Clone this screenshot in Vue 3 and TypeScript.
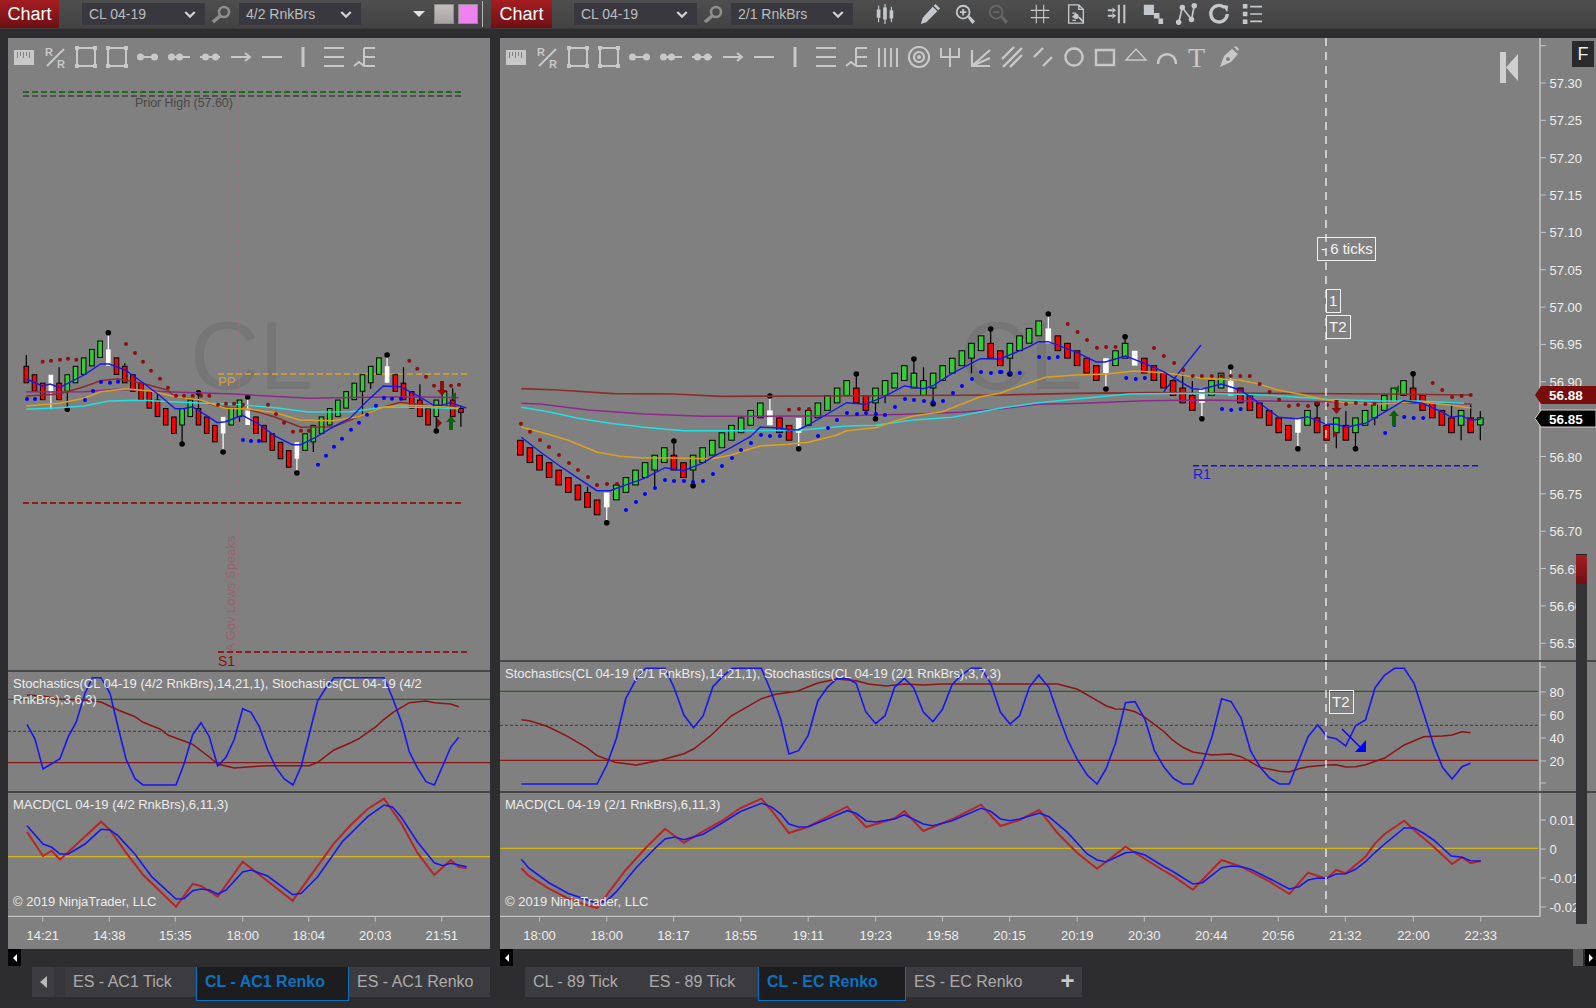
<script setup lang="ts">
type P = [number, number];
type Line = { pts: string; c: string; w: number };
type Dot = { x: number; y: number; r: number; c: string };

const conv = (ox: number, sx: number, oy: number, sy: number) => (a: number[]): P[] => {
  const out: P[] = [];
  for (let i = 0; i < a.length; i += 2) out.push([ox + a[i] / sx, oy + a[i + 1] / sy]);
  return out;
};
const z4 = conv(0, 3, 320, 3);
const z5 = conv(500, 3, 300, 3);
const z6 = conv(1000, 2.63, 300, 3);
const z7 = conv(0, 3, 660, 3);
const z8 = conv(490, 2.8, 650, 3);
const z9 = conv(1040, 2.82, 650, 3);
const glue = (a: P[], b: P[]) => a.filter((p) => p[0] < b[0][0]).concat(b);
const str = (p: P[]) => p.map(([x, y]) => `${x.toFixed(1)},${y.toFixed(1)}`).join(" ");
const rle = (s: string) => s.replace(/(\d+)([a-z])/g, (_, n, c) => c.repeat(+n));
const mkDots = (p: P[], c: string, r = 2.4): Dot[] => p.map(([x, y]) => ({ x, y, r, c }));

const BLUE = "#1616f0";
const GOLD = "#dca01e";
const CYAN = "#1fe0e0";
const PURPLE = "#8c2a8c";
const BROWN = "#8c2c2c";
const DKRED = "#8b0f0f";

const buildCandles = (
  x0: number, step: number, width: number, y0: number, brick: number, height: number,
  levels: number[], colors: string, wicks: [number, number, number][], lastH: number
) => {
  const fill: Record<string, string> = { r: "#ff0000", g: "#32cd32", w: "#ffffff" };
  const bodies = levels.map((l, i) => {
    const c = colors[i];
    const top = y0 + brick * l;
    const h = i === levels.length - 1 ? lastH : height;
    return {
      x: x0 + step * i - width / 2, y: top, w: width, h,
      fill: fill[c], stroke: c === "w" ? "none" : "#000000", mid: top + h / 2,
    };
  });
  const wickLines = wicks.map(([i, y]) => ({
    x: x0 + step * i, y1: bodies[i].mid, y2: y, c: colors[i] === "w" ? "#ffffff" : "#000000",
  }));
  const balls = wicks.filter((w) => w[2]).map(([i, y]) => ({ x: x0 + step * i, y }));
  return { bodies, wickLines, balls };
};

const upArrow = (x: number, y1: number, y2: number) =>
  `${x},${y1} ${x + 5},${y1 + 6} ${x + 2},${y1 + 6} ${x + 2},${y2} ${x - 2},${y2} ${x - 2},${y1 + 6} ${x - 5},${y1 + 6}`;
const downArrow = (x: number, y1: number, y2: number) =>
  `${x},${y2} ${x + 5},${y2 - 6} ${x + 2},${y2 - 6} ${x + 2},${y1} ${x - 2},${y1} ${x - 2},${y2 - 6} ${x - 5},${y2 - 6}`;

// ---------- left chart ----------
const leftCandles = buildCandles(
  26.3, 8.2, 4.6, 366.3, 8.44, 16.5,
  [0,1,2,1,2,1,0,-1,-2,-3,-2,-1,0,1,2,3,4,5,6,5,4,5,6,7,6,5,4,5,6,7,8,9,10,9,8,7,6,5,4,3,2,1,0,-1,0,1,2,3,4,5,4,3,4,5],
  rle("3r1w1r5g1w8r2g3r1w2g1w5r1w10g1w5r2g2r"),
  [[0,355,0],[3,409.3,0],[4,367.3,0],[5,409.3,1],[10,332.7,1],[12,363.3,0],[16,393.3,0],[19,444,1],[21,392.7,1],[24,452,1],[26,421.7,0],[27,397,1],[33,473,1],[35,452,0],[41,414,0],[42,388.7,0],[44,355,1],[46,367.3,0],[48,384.3,0],[50,431,1],[52,388.3,0],[53,406,0],[53,426.7,0]],
  4
);
const leftLines: Line[] = [
  { c: PURPLE, w: 1.6, pts: str(z4([79,215,178,216,252,215,352,208,500,215,700,222,926,235,1100,232,1250,230,1376,233])) },
  { c: BROWN, w: 1.6, pts: str(z4([79,228,178,222,252,200,302,182,352,176,427,190,502,210,526,231,577,236,652,258,752,270,827,292,902,322,1001,320,1075,290,1150,262,1200,247,1301,258,1376,258])) },
  { c: CYAN, w: 1.4, pts: str(z4([79,268,178,263,252,258,328,243,427,241,577,248,702,253,826,263,926,276,1051,275,1150,262,1250,262,1376,266])) },
  { c: GOLD, w: 1.6, pts: str(z4([79,258,178,250,252,235,302,215,376,206,451,213,526,230,601,240,676,265,752,268,827,278,900,300,1000,302,1075,290,1150,262,1200,256,1300,258,1376,265])) },
  { c: BLUE, w: 1.4, pts: str(z4([79,177,127,198,151,192,178,203,252,165,302,132,328,132,376,150,427,187,477,225,526,266,551,266,577,260,625,290,652,308,676,305,727,286,776,312,827,349,877,374,902,374,951,350,1001,320,1051,294,1099,245,1150,198,1200,200,1250,225,1301,256,1325,256,1351,248,1376,256,1399,264])) },
];
const leftDots: Dot[] = [
  ...mkDots(z4([128,125,153,122,180,119,204,116,229,119,378,72,405,99,429,125,453,152,480,176,504,203,528,227,552,227,578,227,603,227,628,227,654,254,678,251,702,251,729,254,804,254,828,282,852,308,879,335,903,332,927,332,1228,122,1252,146,1278,170,1302,197,1327,200,1353,197,1377,194]), DKRED, 2),
  ...mkDots(z4([81,237,105,237,255,240,279,213,303,186,330,188,354,185,729,360,753,363,777,363,954,434,978,407,1002,380,1026,356,1053,329,1077,308,1101,284,1128,257,1152,234,1176,236,1203,236]), "#0000ff", 2),
];
const leftStoch: Line[] = [
  { c: "#8b1414", w: 1.5, pts: str(z7([81,105,129,108,180,118,255,120,303,126,354,150,405,170,429,187,480,207,505,226,552,243,578,253,628,291,653,312,703,324,753,320,803,317,928,317,953,307,1002,270,1052,248,1078,235,1128,200,1152,178,1178,158,1228,128,1278,123,1303,128,1352,132,1376,140])) },
  { c: BLUE, w: 1.6, pts: str(z7([81,193,105,237,129,327,180,296,205,230,229,186,255,100,277,53,303,53,330,100,354,200,378,297,405,356,429,375,528,375,552,312,578,224,603,188,628,230,653,318,678,292,703,238,728,146,753,157,778,200,803,270,828,323,853,357,879,375,904,318,928,222,953,122,977,85,1002,53,1152,53,1178,115,1204,185,1228,275,1252,323,1278,365,1303,375,1328,318,1352,262,1376,232])) },
];
const leftMacd: Line[] = [
  { c: "#b52626", w: 2, pts: str(z7([81,515,129,588,155,572,180,599,303,485,330,510,378,578,430,645,528,740,578,672,603,678,653,710,728,605,878,722,928,652,1002,550,1052,495,1103,447,1152,416,1204,490,1252,578,1303,645,1352,600,1376,620,1400,625])) },
  { c: BLUE, w: 1.6, pts: str(z7([81,497,129,552,155,562,180,582,205,582,255,552,303,508,330,510,354,527,405,583,455,650,528,717,552,716,578,692,603,687,628,690,653,702,678,690,728,636,753,630,803,648,878,704,904,700,953,650,1027,545,1103,470,1152,435,1178,442,1204,472,1252,545,1303,608,1328,617,1352,610,1400,620])) },
];

// ---------- right chart ----------
const rightCandles = buildCandles(
  520.3, 9.6, 5.6, 440.3, 7.46, 14.8,
  [0,1,2,3,4,5,6,7,8,7,6,5,4,3,2,1,2,3,2,1,0,-1,-2,-3,-4,-5,-4,-3,-2,-3,-4,-5,-6,-7,-8,-7,-6,-7,-8,-9,-10,-9,-8,-9,-10,-11,-12,-13,-14,-13,-12,
   -13,-14,-15,-16,-15,-14,-13,-12,-11,-10,-11,-12,-13,-12,-11,-10,-9,-8,-7,-6,-7,-8,-9,-8,-7,-6,-5,-4,-3,-2,-3,-4,-3,-2,-3,-2,-3,-4,-5,-6,-7,-8,-7,-6,-5,-4,-3,-4,-3,-3],
  rle("9r1w6g2r8g1w2r1w5g2r12g2r4g1w5r1w2g1w6r1w2g1w6r1w1g2r1g1r6g5r1g1r1g"),
  [[7,486.7,0],[9,522.7,1],[14,486.7,0],[16,441,1],[18,485.7,1],[26,396,1],[29,448.7,1],[35,374,1],[37,418.7,1],[38,403.3,0],[41,359,1],[42,367.3,0],[43,403.7,1],[47,373.3,0],[49,329,1],[51,374,1],[55,314,1],[61,389,1],[63,336.7,1],[69,374,0],[70,381,0],[71,418.7,1],[74,367,1],[81,448.7,1],[83,404,1],[85,448.3,0],[86,411,0],[87,448.7,1],[89,425.3,0],[93,373.7,1],[97,404,0],[98,440.3,0],[99,404,0],[100,411,0],[100,440.3,0]],
  7
);
const rightLines: Line[] = [
  { c: BROWN, w: 1.7, pts: str(glue(z5([64,266,175,270,340,281,520,282,664,289,1000,288,1500,284]), z6([0,285,200,280,400,278,700,280,1000,282,1240,285]))) },
  { c: PURPLE, w: 1.6, pts: str(glue(z5([64,310,120,312,265,330,433,342,607,349,781,349,1040,347,1213,343,1384,337,1500,327]), z6([0,327,100,313,220,310,380,302,530,300,700,303,860,305,1000,310,1100,308,1240,312]))) },
  { c: CYAN, w: 1.4, pts: str(glue(z5([64,322,145,335,235,355,330,370,433,382,550,392,694,392,895,391,1040,378,1126,376,1240,360,1357,352,1500,331]), z6([0,325,100,308,220,295,340,282,530,280,700,285,860,298,1000,303,1100,303,1220,310]))) },
  { c: GOLD, w: 1.6, pts: str(glue(z5([64,381,145,403,205,421,290,456,360,469,433,474,520,474,637,476,694,465,751,446,781,438,865,433,925,427,1009,406,1040,392,1126,383,1183,364,1240,348,1327,335,1441,290,1500,280]), z6([0,280,60,255,120,232,200,225,280,222,354,213,430,218,480,226,530,235,630,240,680,252,730,270,800,285,850,298,900,307,1000,312,1100,305,1190,316,1238,324]))) },
  { c: BLUE, w: 1.4, pts: str(glue(z5([64,412,120,455,175,495,235,535,291,572,330,572,390,550,433,535,495,503,550,512,607,490,640,470,694,442,751,410,781,381,838,384,865,390,895,389,925,375,982,342,1040,308,1096,313,1153,290,1213,258,1270,266,1297,258,1357,220,1441,176,1498,177]), z6([0,177,25,165,77,140,101,125,127,125,203,158,253,186,277,186,330,168,380,190,430,215,456,233,506,266,530,268,582,252,632,270,683,310,733,352,783,356,809,350,859,373,885,373,910,382,961,370,1036,320,1061,302,1111,310,1161,335,1187,352,1213,347,1238,360,1264,358]))) },
];
const rightDots: Dot[] = [
  ...mkDots(z5([63,371,90,395,120,420,147,441,177,465,207,489,234,510,264,531,291,555,321,552,351,552,867,329,897,327,927,327]), DKRED, 2),
  ...mkDots(z6([178,72,204,96,229,120,255,143,279,141,304,141,405,144,431,168,458,189,482,210,507,228,531,228,557,228,582,228,607,228,632,228,657,228,683,252,709,276,734,299,760,318,784,315,810,318,835,310,860,315,885,312,910,312,936,309,961,312,985,312,1138,249,1163,270,1189,291,1214,288,1238,285]), DKRED, 2),
  ...mkDots(z5([378,630,408,606,435,582,465,564,495,540,522,543,552,543,579,546,609,543,639,522,666,498,696,474,723,450,753,429,783,405,810,408,840,408,954,408,984,384,1011,360,1041,339,1071,342,1098,339,1128,342,1155,345,1185,321,1215,297,1242,300,1272,303,1299,306,1329,303,1359,279,1386,258,1416,237,1443,216,1473,219,1500,216]), "#0000ff", 2),
  ...mkDots(z6([4,216,27,219,52,219,103,171,129,174,152,171,332,234,357,237,381,234,584,327,608,330,633,327,1013,399,1037,375,1063,351,1088,354,1113,354]), "#0000ff", 2),
];
const rightStoch: Line[] = [
  { c: "#8b1414", w: 1.5, pts: str(glue(z8([88,209,110,212,160,229,218,260,270,292,300,317,350,337,410,345,480,330,543,311,570,297,620,255,675,198,760,146,800,133,860,124,918,99,972,87,1025,92,1060,102,1110,108,1160,102,1213,105,1267,102,1568,102]), z9([0,102,50,102,106,118,161,152,186,167,213,177,241,178,268,185,296,202,350,245,376,272,403,292,431,306,485,315,539,312,567,320,621,352,675,364,703,366,730,356,756,350,810,345,835,344,862,351,890,350,918,344,972,324,1027,285,1082,260,1135,258,1162,255,1190,245,1214,248]))) },
  { c: BLUE, w: 1.6, pts: str(glue(z8([88,402,300,402,327,345,354,265,380,146,408,90,435,55,490,55,517,117,543,195,570,233,597,197,624,110,651,80,678,55,760,55,787,125,814,208,837,312,864,302,891,256,918,152,945,112,972,85,1000,85,1025,100,1052,185,1080,221,1106,197,1133,112,1160,85,1186,113,1213,185,1240,215,1267,178,1294,104,1320,75,1347,55,1375,55,1402,100,1429,186,1456,222,1483,197,1510,112,1537,75]), z9([0,80,25,112,50,190,78,270,106,330,133,375,161,402,186,357,213,280,241,158,268,155,296,208,323,302,350,352,376,385,403,402,431,402,458,342,485,260,512,146,539,155,567,204,594,303,621,352,648,385,675,402,703,402,730,330,756,260,783,224,810,260,835,266,862,288,890,227,918,210,945,113,972,75,1000,55,1027,55,1055,100,1082,190,1110,285,1135,352,1162,387,1190,350,1214,340]))) },
];
const rightMacd: Line[] = [
  { c: "#b52626", w: 2, pts: str(glue(z8([88,655,108,677,165,716,218,745,270,765,300,774,327,735,380,660,435,595,490,536,543,578,600,542,650,512,700,475,760,446,787,480,837,549,891,530,1000,470,1053,531,1133,505,1160,483,1213,543,1294,508,1375,464,1429,528,1483,510,1537,480]), z9([0,483,50,550,106,610,161,656,241,590,323,645,378,680,431,719,512,630,567,650,648,695,703,732,756,668,808,686,835,660,862,670,918,620,945,580,972,552,1027,512,1055,540,1110,590,1162,642,1190,622,1214,640,1243,633]))) },
  { c: BLUE, w: 1.6, pts: str(glue(z8([88,628,108,654,165,698,218,730,300,760,327,752,354,725,408,655,462,595,490,567,517,561,543,569,597,553,651,518,700,485,760,460,787,470,814,492,837,522,864,531,891,530,945,507,1000,482,1025,490,1053,513,1080,516,1133,507,1160,494,1213,522,1240,527,1294,512,1375,475,1402,484,1429,507,1456,512,1483,507,1537,490]), z9([0,490,25,500,78,548,133,612,161,630,186,636,241,608,268,606,296,615,350,650,376,665,431,702,458,698,512,653,539,648,567,650,594,658,648,686,703,717,730,710,756,690,783,684,808,685,835,672,862,671,890,658,918,635,945,607,972,582,1027,534,1055,534,1082,550,1110,570,1160,618,1190,622,1214,632,1243,633]))) },
];

const prices = ["57.30","57.25","57.20","57.15","57.10","57.05","57.00","56.95","56.90","56.85","56.80","56.75","56.70","56.65","56.60","56.55"]
  .map((t, i) => ({ t, y: 83 + 37.35 * i }))
  .filter((p) => p.t !== "56.85");
const stochAxis = [{ t: "80", y: 692 }, { t: "60", y: 715 }, { t: "40", y: 738 }, { t: "20", y: 761 }];
const macdAxis = [{ t: "0.01", y: 820 }, { t: "0", y: 849 }, { t: "-0.01", y: 878 }, { t: "-0.02", y: 907 }];

// ---------- shared windows ----------
const windows = [
  {
    id: "left", instr: "CL 04-19", period: "4/2 RnkBrs",
    main: { vb: "8 38 482 632", candles: leftCandles, lines: leftLines, dots: leftDots, wm: 190 },
    stoch: {
      vb: "8 672 482 119", lines: leftStoch, green: 699.3, mid: 731.3, red: 762.7, x1: 8, x2: 490,
      label: "Stochastics(CL 04-19 (4/2 RnkBrs),14,21,1), Stochastics(CL 04-19 (4/2 RnkBrs),3,6,3)",
    },
    macd: { vb: "8 793 482 124", lines: leftMacd, zero: 856.7, x1: 8, x2: 490, label: "MACD(CL 04-19 (4/2 RnkBrs),6,11,3)" },
    axis: {
      vb: "8 918 482 31", x2: 490,
      labels: [["14:21", 42.7], ["14:38", 109.3], ["15:35", 175.3], ["18:00", 242.7], ["18:04", 308.7], ["20:03", 375.3], ["21:51", 441.7]] as [string, number][],
    },
    tools: 12,
    tabs: [
      { t: "ES - AC1 Tick", w: 131 },
      { t: "CL - AC1 Renko", w: 153, on: true },
      { t: "ES - AC1 Renko", w: 141 },
    ],
  },
  {
    id: "right", instr: "CL 04-19", period: "2/1 RnkBrs",
    main: { vb: "500 38 1096 622", candles: rightCandles, lines: rightLines, dots: rightDots, wm: 960 },
    stoch: {
      vb: "500 662 1096 129", lines: rightStoch, green: 691.3, mid: 725.3, red: 760.3, x1: 500, x2: 1538,
      label: "Stochastics(CL 04-19 (2/1 RnkBrs),14,21,1), Stochastics(CL 04-19 (2/1 RnkBrs),3,7,3)",
    },
    macd: { vb: "500 793 1096 124", lines: rightMacd, zero: 848.3, x1: 500, x2: 1538, label: "MACD(CL 04-19 (2/1 RnkBrs),6,11,3)" },
    axis: {
      vb: "500 918 1096 31", x2: 1540,
      labels: [["18:00", 539.6], ["18:00", 606.8], ["18:17", 673.6], ["18:55", 740.7], ["19:11", 808.2], ["19:23", 875.7], ["19:58", 942.5], ["20:15", 1009.6], ["20:19", 1077.2], ["20:30", 1144.3], ["20:44", 1211.3], ["20:56", 1278.3], ["21:32", 1345.3], ["22:00", 1413.4], ["22:33", 1480.8]] as [string, number][],
    },
    tools: 24,
    tabs: [
      { t: "CL - 89 Tick", w: 116 },
      { t: "ES - 89 Tick", w: 117 },
      { t: "CL - EC Renko", w: 148, on: true },
      { t: "ES - EC Renko", w: 147 },
    ],
  },
];

type Ico = { s?: string; f?: string; sw?: number; t?: [string, number, number, number][] };
const drawIcons: Ico[] = [
  { f: "M2 5h20v15H2z M5 7v6h1V7z M8 7v4h1V7z M11 7v6h1V7z M14 7v4h1V7z M17 7v6h1V7z" },
  { s: "M4 21L21 4", t: [["R", 2, 11, 11], ["R", 14, 23, 11]] },
  { s: "M3 3h18v18H3z", f: "M1 1h4v4H1z M19 1h4v4h-4z M1 19h4v4H1z M19 19h4v4h-4z" },
  { s: "M3 3h18v18H3z", f: "M1 1h4v4H1z M19 1h4v4h-4z M1 19h4v4H1z M19 19h4v4h-4z" },
  { s: "M5 12h17", f: "M1 12a3.5 3.5 0 1 0 7 0a3.5 3.5 0 1 0-7 0z M15 12a3.5 3.5 0 1 0 7 0a3.5 3.5 0 1 0-7 0z" },
  { s: "M5 12h18", f: "M1 12a3.5 3.5 0 1 0 7 0a3.5 3.5 0 1 0-7 0z M9 12a3.5 3.5 0 1 0 7 0a3.5 3.5 0 1 0-7 0z" },
  { s: "M2 12h20", f: "M4 12a3.5 3.5 0 1 0 7 0a3.5 3.5 0 1 0-7 0z M14 12a3.5 3.5 0 1 0 7 0a3.5 3.5 0 1 0-7 0z" },
  { s: "M2 12h19M16 8l5 4-5 4" },
  { s: "M2 12h20" },
  { s: "M12 2v20", sw: 3 },
  { s: "M2 3h20M2 12h20M2 21h20" },
  { s: "M11 3h11M11 12h11M11 21h11M11 3v18M1 21l5-4 5 4" },
  { s: "M3 3v19M9 3v19M15 3v19M21 3v19" },
  { s: "M12 2a10 10 0 1 0 0.01 0zM12 7a5 5 0 1 0 0.01 0z", f: "M10 12a2 2 0 1 0 4 0a2 2 0 1 0-4 0z", sw: 2.2 },
  { s: "M3 3v9h18V3M12 3v19" },
  { s: "M3 5v16h18M3 21L21 5M3 21L21 13", sw: 2.2 },
  { s: "M2 14L14 2M3 22L22 3M10 22L22 10", sw: 2.4 },
  { s: "M3 12L12 3M12 21L21 12", sw: 2.4 },
  { s: "M12 3.5a8.5 8.5 0 1 0 0.01 0z", sw: 2.4 },
  { s: "M3 5h18v15H3z", sw: 2.4 },
  { s: "M2 15L12 4L22 15Z", sw: 1.4 },
  { s: "M3 19C3 6 21 6 21 19", sw: 2.4 },
  { t: [["T", 2, 22, 28]] },
  { f: "M3 22L7 11L15 4l6 5-7 8zM17 2l2-1 3 3-1 2z M9 14a2 2 0 1 0 4 0a2 2 0 1 0-4 0z" },
];

const topIcons: (Ico & { gap: number; dim?: string })[] = [
  { gap: 21, s: "M5 3v18M12 1v22M19 4v17", sw: 1.3, f: "M3 7h4v9H3z M10 5h4v13h-4z M17 8h4v9h-4z" },
  { gap: 23, f: "M4 16L15 4l5 5L8 21l-6 2z M16 3l2-2 5 5-2 2z" },
  { gap: 13, s: "M3 10a7 7 0 1 0 14 0a7 7 0 1 0-14 0M6.5 10h7M10 6.5v7", sw: 2, f: "M15 16l2-2 6 6-3 3z" },
  { gap: 11, s: "M3 10a7 7 0 1 0 14 0a7 7 0 1 0-14 0M6.5 10h7", sw: 2, f: "M15 16l2-2 6 6-3 3z", dim: "#676767" },
  { gap: 20, s: "M8 2v20M16 2v20M2 8h20M2 16h20", sw: 1.2 },
  { gap: 14, s: "M4 2h11l5 5v15H4zM15 2v5h5M8 11h4M8 15h2M8 19h4", sw: 1.5, f: "M12 11.5a3 3 0 1 0 .01 0z M14.5 16l1.5-1 5 5-1.5 1.5z" },
  { gap: 19, s: "M14 2v20M20 2v20M2 8h5M2 14h5", sw: 2.2, f: "M7 5l4 3-4 3z M7 11l4 3-4 3z" },
  { gap: 14, f: "M2 2h11v11H2z M13 11h6v6h-6z M18 17h5v6h-5z" },
  { gap: 11, s: "M4 21L8 5L18 18L21 3", sw: 1.8, f: "M1 21a3 3 0 1 0 6 0a3 3 0 1 0-6 0z M5 5a3 3 0 1 0 6 0a3 3 0 1 0-6 0z M15 18a3 3 0 1 0 6 0a3 3 0 1 0-6 0z M18 3a3 3 0 1 0 6 0a3 3 0 1 0-6 0z" },
  { gap: 11, s: "M18 5a9 9 0 1 0 3 7", sw: 3.6, f: "M15 2l7 1-1 7z" },
  { gap: 11, s: "M10 4h13M10 12h13M10 20h13", sw: 1.8, f: "M2 1h5v5H2z M2 9.500h5v5H2z M2 18h5v5H2z" },
];
</script>

<template>
  <div class="screen">
    <section v-for="win in windows" :key="win.id" class="window" :class="win.id">
      <header class="topbar">
        <button class="chart-btn">Chart</button>
        <div class="select first">
          <span>{{ win.instr }}</span>
          <svg class="chev" viewBox="0 0 14 9"><path d="M1.500 1.500l5.500 5.500 5.500-5.500" /></svg>
        </div>
        <svg class="mag" viewBox="0 0 20 20">
          <path class="mag-c" d="M8 8a5 5 0 1 0 10 0a5 5 0 1 0-10 0z" />
          <path class="mag-h" d="M9 12L2 18" />
        </svg>
        <div class="select">
          <span>{{ win.period }}</span>
          <svg class="chev" viewBox="0 0 14 9"><path d="M1.500 1.500l5.500 5.500 5.500-5.500" /></svg>
        </div>
        <template v-if="win.id === 'left'">
          <div class="caret"></div>
          <div class="swatch gray"></div>
          <div class="swatch pink"></div>
          <div class="sep"></div>
        </template>
        <template v-else>
          <svg v-for="(ic, i) in topIcons" :key="i" class="top-ico" viewBox="0 0 24 24"
            :style="{ marginLeft: ic.gap + 'px' }">
            <path v-if="ic.s" :d="ic.s" fill="none" :stroke="ic.dim || '#c4c8cc'" :stroke-width="ic.sw || 2" />
            <path v-if="ic.f" :d="ic.f" :fill="ic.dim || '#c4c8cc'" fill-rule="evenodd" />
          </svg>
        </template>
      </header>

      <div class="chart">
        <!-- price panel -->
        <div class="pane main">
          <svg class="plot" :viewBox="win.main.vb">
            <text class="watermark" :x="win.main.wm" y="389">CL</text>

            <template v-if="win.id === 'left'">
              <line x1="238.500" y1="79" x2="238.500" y2="670" class="dots-v" />
              <text class="faint" transform="translate(235 652) rotate(-90)">A Gov Lows Speaks</text>
              <line x1="23" y1="92" x2="463" y2="92" class="dash" stroke="#006400" />
              <line x1="23" y1="96" x2="463" y2="96" class="dash" stroke="#404040" />
              <text class="note" x="135" y="107">Prior High (57.60)</text>
              <line x1="23" y1="503" x2="463" y2="503" class="dash" stroke="#8b0000" />
              <line x1="218" y1="374" x2="467" y2="374" class="dash" stroke="#daa520" />
              <text class="note pp" x="218" y="386">PP</text>
              <line x1="218" y1="652" x2="467" y2="652" class="dash" stroke="#8b0000" />
              <text class="note s1" x="218" y="666">S1</text>
            </template>
            <template v-else>
              <line x1="1193" y1="465.700" x2="1480" y2="465.700" class="dash" stroke="#1212d8" />
              <text class="note r1" x="1193" y="479">R1</text>
              <line x1="1163.500" y1="392" x2="1201" y2="345" stroke="#1616f0" stroke-width="1.400" />
            </template>

            <line v-for="(w, i) in win.main.candles.wickLines" :key="'w' + i"
              :x1="w.x" :x2="w.x" :y1="w.y1" :y2="w.y2" :stroke="w.c" stroke-width="1.200" />
            <circle v-for="(b, i) in win.main.candles.balls" :key="'b' + i" :cx="b.x" :cy="b.y" r="2.800" fill="#000" />
            <rect v-for="(c, i) in win.main.candles.bodies" :key="'c' + i"
              :x="c.x" :y="c.y" :width="c.w" :height="c.h" :fill="c.fill" :stroke="c.stroke" stroke-width="1" />

            <polyline v-for="l in win.main.lines" :key="l.c" :points="l.pts" fill="none" :stroke="l.c" :stroke-width="l.w" />
            <circle v-for="(d, i) in win.main.dots" :key="'d' + i" :cx="d.x" :cy="d.y" :r="d.r" :fill="d.c" />

            <template v-if="win.id === 'left'">
              <polygon :points="downArrow(442, 381, 396)" fill="#8b0f0f" />
              <polygon :points="upArrow(451, 416, 430)" fill="#0c620c" />
              <polygon points="451,396 456,392 456,400" fill="#0c620c" />
              <polygon points="437,418 442,423 437,428" fill="#8b0f0f" />
            </template>
            <template v-else>
              <polygon :points="downArrow(1336.500, 400, 414)" fill="#8b0f0f" />
              <polygon :points="upArrow(1394, 410, 426)" fill="#0c620c" />
              <polygon points="1394,389 1399,385 1399,393" fill="#0c620c" />
              <polygon points="1333,430 1338,434 1333,438" fill="#8b0f0f" />

              <line x1="1326" y1="38" x2="1326" y2="660" class="cross" />
              <path class="axis-line" d="M1540 38V660" />
              <g v-for="p in prices" :key="p.t">
                <line x1="1540" :y1="p.y" x2="1546" :y2="p.y" class="tick" />
                <text class="axis-txt" x="1549.500" :y="p.y + 5">{{ p.t }}</text>
              </g>
              <line x1="1540" y1="45.700" x2="1546" y2="45.700" class="tick" />
              <rect x="1317.500" y="237.500" width="58" height="23" class="box" />
              <text class="box-txt" x="1321" y="254">- 6 ticks</text>
              <rect x="1326.500" y="289.500" width="14" height="23" class="box" />
              <text class="box-txt" x="1329" y="306">1</text>
              <rect x="1326.500" y="315.500" width="24" height="23" class="box" />
              <text class="box-txt" x="1329" y="332">T2</text>

              <polygon points="1535,395 1541,386 1596,386 1596,404 1541,404" fill="#780b0b" />
              <text class="tag-txt" x="1549" y="400">56.88</text>
              <polygon points="1535,418.500 1541,410 1596,410 1596,427 1541,427" fill="#000" stroke="#cfcfcf" />
              <text class="tag-txt" x="1549" y="423.500">56.85</text>

              <path d="M1500 52h6v31h-6z M1518 54v27l-12-13.500z" fill="#cfcfcf" />
            </template>
          </svg>
          <div class="draw-tools">
            <svg v-for="(ic, i) in drawIcons.slice(0, win.tools)" :key="i" class="draw-ico" viewBox="0 0 24 24">
              <path v-if="ic.s" :d="ic.s" fill="none" stroke="#c8c8c8" :stroke-width="ic.sw || 2" />
              <path v-if="ic.f" :d="ic.f" fill="#c8c8c8" fill-rule="evenodd" />
              <text v-for="tx in ic.t || []" :key="tx[1]" :class="tx[3] > 20 ? 'ico-serif' : 'ico-r'"
                :x="tx[1]" :y="tx[2]" :font-size="tx[3]">{{ tx[0] }}</text>
            </svg>
          </div>
          <div v-if="win.id === 'right'" class="f-btn">F</div>
        </div>

        <!-- stochastics -->
        <div class="pane stoch">
          <svg class="plot" :viewBox="win.stoch.vb">
            <line :x1="win.stoch.x1" :x2="win.stoch.x2" :y1="win.stoch.green" :y2="win.stoch.green" stroke="#0f5a0f" />
            <line :x1="win.stoch.x1" :x2="win.stoch.x2" :y1="win.stoch.mid" :y2="win.stoch.mid" stroke="#3c3c3c" stroke-dasharray="3 2" />
            <line :x1="win.stoch.x1" :x2="win.stoch.x2" :y1="win.stoch.red" :y2="win.stoch.red" stroke="#8b0000" />
            <polyline v-for="l in win.stoch.lines" :key="l.c" :points="l.pts" fill="none" :stroke="l.c" :stroke-width="l.w" />
            <template v-if="win.id === 'right'">
              <line x1="1326" y1="662" x2="1326" y2="791" class="cross" />
              <path class="axis-line" d="M1540 662V791" />
              <line v-for="y in [667, 692, 715, 738, 761, 783]" :key="y" x1="1540" x2="1546" :y1="y" :y2="y" class="tick" />
              <text v-for="a in stochAxis" :key="a.t" class="axis-txt" x="1549.500" :y="a.y + 5">{{ a.t }}</text>
              <rect x="1329.500" y="690.500" width="24" height="23" class="box" />
              <text class="box-txt" x="1332" y="707">T2</text>
              <line x1="1342" y1="729" x2="1360" y2="747" stroke="#0000ff" stroke-width="1.500" />
              <polygon points="1366,752 1355,752 1366,740" fill="#0000ff" />
            </template>
          </svg>
          <div class="pane-label">{{ win.stoch.label }}</div>
        </div>

        <!-- macd -->
        <div class="pane macd">
          <svg class="plot" :viewBox="win.macd.vb">
            <line :x1="win.macd.x1" :x2="win.macd.x2" :y1="win.macd.zero" :y2="win.macd.zero" stroke="#e6c200" />
            <polyline v-for="l in win.macd.lines" :key="l.c" :points="l.pts" fill="none" :stroke="l.c" :stroke-width="l.w" />
            <template v-if="win.id === 'right'">
              <line x1="1326" y1="793" x2="1326" y2="915" class="cross" />
              <path class="axis-line" d="M1540 793V917" />
              <g v-for="a in macdAxis" :key="a.t">
                <line x1="1540" x2="1546" :y1="a.y" :y2="a.y" class="tick" />
                <text class="axis-txt" x="1549.500" :y="a.y + 5">{{ a.t }}</text>
              </g>
            </template>
            <path class="axis-line" :d="`M${win.macd.x1} 916.500H${win.axis.x2}`" />
          </svg>
          <div class="pane-label">{{ win.macd.label }}</div>
          <div class="copyright">© 2019 NinjaTrader, LLC</div>
        </div>

        <!-- time axis -->
        <div class="time-axis">
          <svg class="plot" :viewBox="win.axis.vb">
            <g v-for="(lb, i) in win.axis.labels" :key="i">
              <line :x1="lb[1]" :x2="lb[1]" y1="917" y2="922" class="tick" />
              <text class="axis-txt mid" :x="lb[1]" y="940">{{ lb[0] }}</text>
            </g>
          </svg>
        </div>

        <div v-if="win.id === 'right'" class="behind"><div class="behind-head"></div></div>

        <div class="scrollbar">
          <div class="scroll-btn"><i class="tri-l"></i></div>
          <div class="scroll-end" v-if="win.id === 'right'">
            <div class="thumb"></div>
            <div class="scroll-btn"><i class="tri-r"></i></div>
          </div>
        </div>
      </div>

      <nav class="tabs">
        <template v-if="win.id === 'left'">
          <div class="tab-back"><i class="tri-back"></i></div>
          <div class="tab-space"></div>
        </template>
        <div v-for="t in win.tabs" :key="t.t" class="tab" :class="{ on: t.on }" :style="{ width: t.w + 'px' }">{{ t.t }}</div>
        <div v-if="win.id === 'right'" class="tab-add">+</div>
      </nav>
    </section>
  </div>
</template>

<style>
html, body { margin: 0; background: #2d2d30; }
</style>

<style scoped>
.screen {
  width: 1596px;
  height: 1008px;
  display: flex;
  overflow: hidden;
  background: #2d2d30;
  font-family: "Liberation Sans", Arial, sans-serif;
}
.window { display: flex; flex-direction: column; height: 1008px; }
.window.left { width: 491px; }
.window.right { width: 1105px; }

.topbar {
  height: 29px;
  margin-bottom: 9px;
  display: flex;
  align-items: center;
  flex: none;
  background: linear-gradient(#4e4e4e, #434343);
  border-bottom: 1px solid #3a3a3a;
  box-sizing: border-box;
}
.chart-btn {
  width: 59px;
  height: 28px;
  padding: 0;
  border: 0;
  color: #fff;
  font: 18px "Liberation Sans", Arial, sans-serif;
  background: linear-gradient(#a51e22, #6e1014);
}
.right .chart-btn { width: 61px; }
.select {
  width: 122px;
  height: 22px;
  margin-left: 8px;
  padding: 0 7px;
  box-sizing: border-box;
  display: flex;
  align-items: center;
  justify-content: space-between;
  font-size: 14px;
  color: #bdbdbd;
  background: #38383e;
}
.select.first { margin-left: 23px; width: 123px; }
.right .select.first { margin-left: 22px; }
.chev { width: 12px; height: 9px; margin-right: 2px; }
.chev path { fill: none; stroke: #d0d0d0; stroke-width: 2.600; }
.mag { width: 20px; height: 20px; margin-left: 6px; flex: none; }
.mag-c { fill: none; stroke: #8e8e8e; stroke-width: 2.600; }
.mag-h { stroke: #8e8e8e; stroke-width: 3.600; }
.caret {
  margin-left: 52px;
  width: 0;
  height: 0;
  border: 6px solid transparent;
  border-top: 6px solid #e2e2e2;
  border-bottom: 0;
}
.swatch { width: 20px; height: 20px; box-sizing: border-box; border: 1px solid #8f8f8f; }
.swatch.gray { margin-left: 9px; background: linear-gradient(#c4bebe, #a8a2a2); }
.swatch.pink { margin-left: 4px; background: #ee82ee; }
.sep { margin-left: 4px; width: 1px; height: 26px; background: #b5b5b5; }
.top-ico { width: 22px; height: 22px; flex: none; }

.chart {
  position: relative;
  flex: none;
  height: 929px;
  display: flex;
  flex-direction: column;
  background: #2d2d30;
}
.left .chart { margin-left: 8px; margin-right: 1px; }
.right .chart { margin-left: 9px; }
.pane { position: relative; flex: none; background: #808080; border-bottom: 2px solid #484848; }
.left .main { height: 632px; }
.right .main { height: 622px; }
.left .stoch { height: 119px; }
.right .stoch { height: 129px; }
.macd { height: 124px; border-bottom: 0; }
.plot { display: block; width: 100%; height: 100%; }
.time-axis { height: 32px; background: #808080; flex: none; }

.watermark { font-size: 96px; fill: #767676; }
.dots-v { stroke: #a56d7c; stroke-width: 2; stroke-dasharray: 2 3; }
.faint { font-size: 13px; fill: #97636f; }
.dash { stroke-width: 1.600; stroke-dasharray: 6 3; }
.note { font-size: 12.400px; fill: #484848; }
.note.pp { fill: #d0a040; font-size: 13px; }
.note.s1 { fill: #8b0f0f; font-size: 14px; }
.note.r1 { fill: #1e1ed0; font-size: 14px; }
.cross { stroke: #fff; stroke-width: 1.200; stroke-dasharray: 8 6; }
.axis-line { stroke: #c4c4c4; stroke-width: 1.500; fill: none; }
.tick { stroke: #c4c4c4; stroke-width: 1; }
.axis-txt { font-size: 13px; fill: #eeeeee; }
.axis-txt.mid { text-anchor: middle; }
.box { fill: none; stroke: #f0f0f0; stroke-width: 1; }
.box-txt { font-size: 15px; fill: #f4f4f4; }
.tag-txt { font-size: 13.500px; fill: #fff; font-weight: 700; }

.draw-tools { position: absolute; left: 4px; top: 7px; display: flex; gap: 7px; }
.draw-ico { width: 24px; height: 24px; flex: none; }
.ico-r { font-family: "Liberation Sans", sans-serif; font-weight: 700; fill: #c8c8c8; }
.ico-serif { font-family: "Liberation Serif", serif; fill: #c8c8c8; }
.f-btn {
  position: absolute;
  right: 2px;
  top: 3px;
  width: 22px;
  height: 26px;
  background: #2a2a2c;
  color: #eee;
  font-size: 18px;
  text-align: center;
  line-height: 26px;
}
.pane-label {
  position: absolute;
  left: 5px;
  top: 4px;
  width: 450px;
  font-size: 13px;
  line-height: 16px;
  color: #ececec;
}
.right .pane-label { width: 800px; }
.copyright {
  position: absolute;
  left: 5px;
  bottom: 7px;
  font-size: 13px;
  line-height: 16px;
  color: #ececec;
}
.behind {
  position: absolute;
  left: 1076px;
  top: 516px;
  width: 11px;
  height: 369px;
  background: #333336;
  border-top: 1px solid #222;
}
.behind-head { height: 29px; background: linear-gradient(#a51e22, #6e1014); }

.scrollbar {
  height: 18px;
  display: flex;
  justify-content: space-between;
  flex: none;
  background: #2d2d30;
}
.scroll-btn {
  width: 13px;
  height: 17px;
  background: #000;
  display: flex;
  align-items: center;
  justify-content: center;
}
.right .scroll-end .scroll-btn { width: 11px; }
.scroll-end { display: flex; gap: 2px; }
.thumb { width: 10px; height: 17px; background: #5a5a5a; }
.tri-l, .tri-r { width: 0; height: 0; border: 4px solid transparent; }
.tri-l { border-right: 4px solid #fff; border-left: 0; }
.tri-r { border-left: 4px solid #fff; border-right: 0; }

.tabs { flex: 1; display: flex; align-items: flex-start; }
.left .tabs { padding-left: 32px; }
.right .tabs { padding-left: 34px; }
.tab-back {
  width: 22px;
  height: 30px;
  background: #3c3c41;
  display: flex;
  align-items: center;
  justify-content: center;
}
.tri-back { width: 0; height: 0; border: 6px solid transparent; border-right: 7px solid #b8b8b8; border-left: 0; }
.tab-space { width: 11px; height: 30px; background: #37373b; }
.tab {
  height: 30px;
  padding-left: 8px;
  box-sizing: border-box;
  background: #3b3b40;
  color: #ababab;
  font-size: 16px;
  line-height: 30px;
  white-space: nowrap;
}
.tab.on {
  height: 34px;
  background: #1d1d1f;
  color: #0b72c0;
  font-weight: 700;
  border: 1px solid #0b72c0;
  border-top: 0;
  line-height: 30px;
}
.tab-add {
  width: 29px;
  height: 30px;
  background: #3b3b40;
  color: #c8c8c8;
  font-size: 24px;
  font-weight: 700;
  line-height: 28px;
  text-align: center;
}
</style>
